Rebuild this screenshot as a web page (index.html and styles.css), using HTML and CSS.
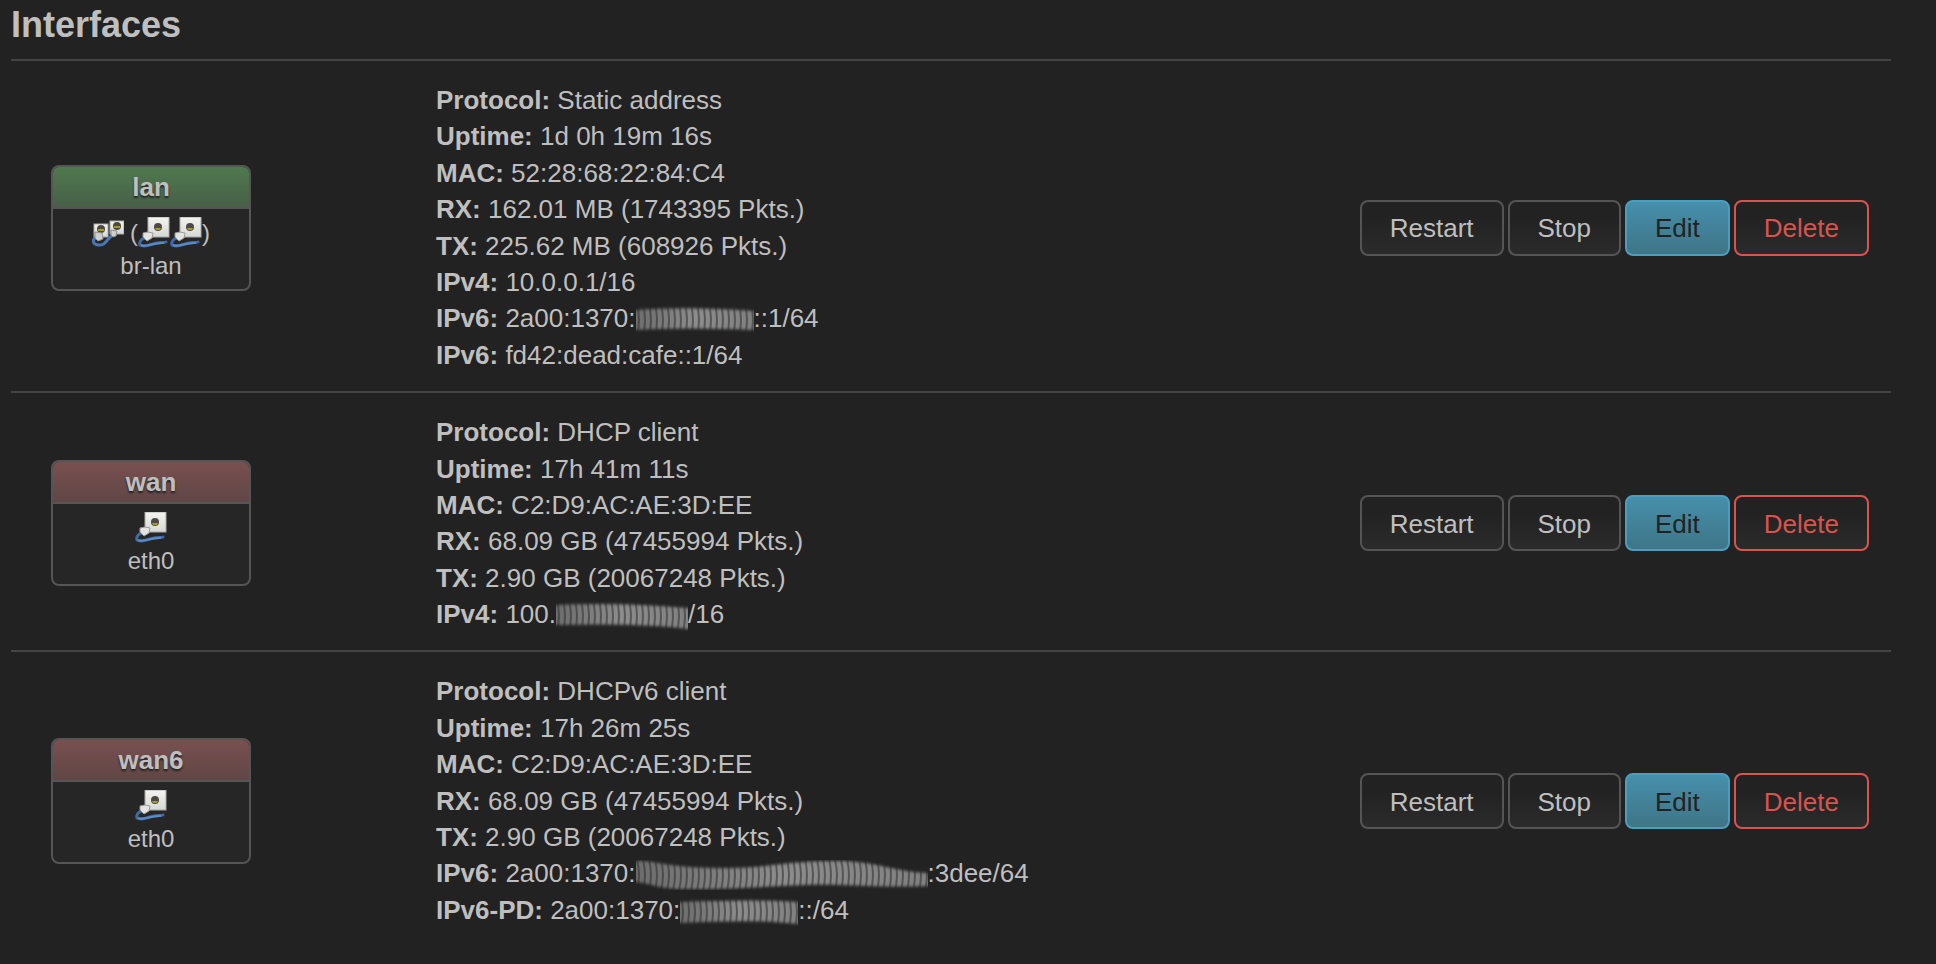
FILE: index.html
```html
<!DOCTYPE html>
<html lang="en">
<head>
<meta charset="utf-8">
<title>Interfaces</title>
<link rel="stylesheet" href="styles.css">
</head>
<body>
<svg class="defs" aria-hidden="true">
  <defs>
    <linearGradient id="plate" x1="0" y1="0" x2="0" y2="1"><stop offset="0" stop-color="#f4f4f2"/><stop offset="1" stop-color="#d6d8d6"/></linearGradient>
    <linearGradient id="ring" x1="0" y1="0" x2="1" y2="0"><stop offset="0" stop-color="#6c6c6c"/><stop offset=".5" stop-color="#8c8c8c"/><stop offset="1" stop-color="#808080"/></linearGradient>
    <pattern id="coil" width="6" height="30" patternUnits="userSpaceOnUse"><path d="M1 0q4 15 0 30" fill="none" stroke="#2c2c2c" stroke-opacity=".55" stroke-width="2"/></pattern>
    <filter id="soft" x="0" y="-20%" width="100%" height="140%"><feGaussianBlur stdDeviation="0.6 1.4"/></filter>
    <filter id="haze" x="-20%" y="-20%" width="140%" height="140%"><feGaussianBlur stdDeviation="0.5"/></filter>
    <symbol id="ethernet" viewBox="0 0 32 32">
      <g filter="url(#haze)">
        <path d="M7 21C3 22 1 25 2 28c5 3 11-1 17-2 4-1 7 0 9-1" fill="none" stroke="#3f6ba6" stroke-width="3" stroke-linecap="round"/>
        <path d="M3 28c6 3 12-3 23-2" fill="none" stroke="#5b8cc8" stroke-width="2"/>
        <rect x="10" y="0" width="21" height="20" fill="url(#plate)" stroke="#a9aaa8"/>
        <circle cx="20" cy="10" r="4" fill="#4b4a42"/>
        <path d="M17 11h6l-1 2h-4z" fill="#a79a22"/>
        <path d="M5 16l5-1 5 1-1 5-5 3-4-4z" fill="#e3e3e3" stroke="#9b9b9b"/>
      </g>
    </symbol>
    <symbol id="bridge" viewBox="0 0 32 32">
      <g filter="url(#haze)">
        <rect x="2" y="7" width="14" height="13" fill="url(#plate)" stroke="#a9aaa8"/>
        <rect x="18" y="4" width="14" height="13" fill="url(#plate)" stroke="#a9aaa8"/>
        <circle cx="9" cy="12" r="4" fill="#4b4a42"/><circle cx="25" cy="9" r="4" fill="#4b4a42"/>
        <path d="M6 12h6v2H6zM22 9h6v2h-6z" fill="#a79a22"/>
        <path d="M5 20C0 22 0 27 6 28c8 1 8-6 15-10" fill="none" stroke="#4677b4" stroke-width="3"/>
        <path d="M3 15l7 1 1 6-5 2-3-3zM19 13l6 1-1 5-3 1-2-2z" fill="#cfcfcf" stroke="#909090"/>
      </g>
    </symbol>
  </defs>
</svg>
<main class="page">
  <h1 class="title">Interfaces</h1>
  <table class="interfaces">
    <tbody>
      <tr class="row">
        <td class="cell-badge">
          <div class="badge">
            <div class="badge-head zone-lan">lan</div>
            <div class="badge-body">
              <div class="devices"><svg class="icon"><use href="#bridge"/></svg><span class="members">(<svg class="icon"><use href="#ethernet"/></svg><svg class="icon"><use href="#ethernet"/></svg>)</span></div>
              <div>br-lan</div>
            </div>
          </div>
        </td>
        <td class="cell-info">
          <div><strong>Protocol:</strong> Static address</div>
          <div><strong>Uptime:</strong> 1d 0h 19m 16s</div>
          <div><strong>MAC:</strong> 52:28:68:22:84:C4</div>
          <div><strong>RX:</strong> 162.01 MB (1743395 Pkts.)</div>
          <div><strong>TX:</strong> 225.62 MB (608926 Pkts.)</div>
          <div><strong>IPv4:</strong> 10.0.0.1/16</div>
          <div><strong>IPv6:</strong> 2a00:1370:<svg class="smudge smudge-short" viewBox="0 0 118 30"><g filter="url(#soft)"><path d="M0 5Q50 1 118 6V25Q50 22 0 25z" fill="url(#ring)"/><path d="M0 5Q50 1 118 6V25Q50 22 0 25z" fill="url(#coil)"/></g></svg>::1/64</div>
          <div><strong>IPv6:</strong> fd42:dead:cafe::1/64</div>
        </td>
        <td class="cell-actions">
          <div class="actions">
            <button type="button" class="btn">Restart</button>
            <button type="button" class="btn">Stop</button>
            <button type="button" class="btn btn-edit">Edit</button>
            <button type="button" class="btn btn-delete">Delete</button>
          </div>
        </td>
      </tr>
      <tr class="row">
        <td class="cell-badge">
          <div class="badge">
            <div class="badge-head zone-wan">wan</div>
            <div class="badge-body">
              <div class="devices"><svg class="icon"><use href="#ethernet"/></svg></div>
              <div>eth0</div>
            </div>
          </div>
        </td>
        <td class="cell-info">
          <div><strong>Protocol:</strong> DHCP client</div>
          <div><strong>Uptime:</strong> 17h 41m 11s</div>
          <div><strong>MAC:</strong> C2:D9:AC:AE:3D:EE</div>
          <div><strong>RX:</strong> 68.09 GB (47455994 Pkts.)</div>
          <div><strong>TX:</strong> 2.90 GB (20067248 Pkts.)</div>
          <div><strong>IPv4:</strong> 100.<svg class="smudge smudge-medium" viewBox="0 0 132 30"><g filter="url(#soft)"><path d="M0 4Q60 1 132 7V28Q90 22 0 24z" fill="url(#ring)"/><path d="M0 4Q60 1 132 7V28Q90 22 0 24z" fill="url(#coil)"/></g></svg>/16</div>
        </td>
        <td class="cell-actions">
          <div class="actions">
            <button type="button" class="btn">Restart</button>
            <button type="button" class="btn">Stop</button>
            <button type="button" class="btn btn-edit">Edit</button>
            <button type="button" class="btn btn-delete">Delete</button>
          </div>
        </td>
      </tr>
      <tr class="row">
        <td class="cell-badge">
          <div class="badge">
            <div class="badge-head zone-wan">wan6</div>
            <div class="badge-body">
              <div class="devices"><svg class="icon"><use href="#ethernet"/></svg></div>
              <div>eth0</div>
            </div>
          </div>
        </td>
        <td class="cell-info">
          <div><strong>Protocol:</strong> DHCPv6 client</div>
          <div><strong>Uptime:</strong> 17h 26m 25s</div>
          <div><strong>MAC:</strong> C2:D9:AC:AE:3D:EE</div>
          <div><strong>RX:</strong> 68.09 GB (47455994 Pkts.)</div>
          <div><strong>TX:</strong> 2.90 GB (20067248 Pkts.)</div>
          <div><strong>IPv6:</strong> 2a00:1370:<svg class="smudge smudge-long" viewBox="0 0 292 30"><g filter="url(#soft)"><path d="M0 1C20 0 30 8 90 8C130 8 150 1 200 1C240 1 260 12 292 13V26C240 28 210 24 170 25C130 26 110 29 60 29C20 30 20 24 0 22z" fill="url(#ring)"/><path d="M0 1C20 0 30 8 90 8C130 8 150 1 200 1C240 1 260 12 292 13V26C240 28 210 24 170 25C130 26 110 29 60 29C20 30 20 24 0 22z" fill="url(#coil)"/></g></svg>:3dee/64</div>
          <div><strong>IPv6-PD:</strong> 2a00:1370:<svg class="smudge smudge-short" viewBox="0 0 118 30"><g filter="url(#soft)"><path d="M0 5Q80 2 118 5V27Q80 22 0 26z" fill="url(#ring)"/><path d="M0 5Q80 2 118 5V27Q80 22 0 26z" fill="url(#coil)"/></g></svg>::/64</div>
        </td>
        <td class="cell-actions">
          <div class="actions">
            <button type="button" class="btn">Restart</button>
            <button type="button" class="btn">Stop</button>
            <button type="button" class="btn btn-edit">Edit</button>
            <button type="button" class="btn btn-delete">Delete</button>
          </div>
        </td>
      </tr>
    </tbody>
  </table>
</main>
</body>
</html>
```
FILE: styles.css
```css
* {
  box-sizing: border-box;
}

body {
  margin: 0;
  background: #222222;
  color: #bfbfbf;
  font: 26px/1.4 "Liberation Sans", Arial, sans-serif;
}

.defs {
  position: absolute;
  width: 0;
  height: 0;
}

.page {
  padding: 0 45px 0 11px;
}

.title {
  margin: 0;
  padding: 5px 0 14px;
  font-size: 36px;
  line-height: 40px;
}

.interfaces {
  width: 100%;
  border-collapse: separate;
  border-spacing: 0;
}

.row td {
  padding: 21px 0 18px;
  border-top: 2px solid #444444;
  vertical-align: middle;
}

.row .cell-badge {
  width: 425px;
  padding-left: 40px;
}

.row .cell-actions {
  padding-right: 22px;
}

.badge {
  width: 200px;
  border: 2px solid #555555;
  border-radius: 8px;
  overflow: hidden;
  text-align: center;
  background: #262626;
}

.badge-head {
  border-bottom: 2px solid #555555;
  font-weight: bold;
  line-height: 40px;
  text-shadow: 0 2px 2px #222222;
}

.zone-lan {
  background: linear-gradient(#4f794f, #486048);
}

.zone-wan {
  background: linear-gradient(#795050, #604646);
}

.badge-body {
  padding: 8px 0 6px;
  font-size: 24px;
  line-height: 34px;
}

.devices {
  display: flex;
  justify-content: center;
  align-items: center;
  gap: 6px;
  height: 32px;
}

.members {
  display: flex;
  align-items: center;
}

.icon {
  display: block;
  width: 32px;
  height: 32px;
}

.smudge {
  height: 30px;
  margin: -4px 0;
  vertical-align: -4px;
}

.smudge-short {
  width: 118px;
}

.smudge-medium {
  width: 132px;
}

.smudge-long {
  width: 292px;
}

.actions {
  display: flex;
  justify-content: flex-end;
  gap: 4px;
}

.btn {
  height: 56px;
  padding: 2px 28px 0;
  border: 2px solid #555555;
  border-radius: 8px;
  background: linear-gradient(#222222 30%, #2b2b2b);
  color: #bfbfbf;
  font: inherit;
}

.btn-edit {
  border-color: #4a9fc0;
  background: linear-gradient(#468fab, #3f7587);
  color: #222222;
}

.btn-delete {
  border-color: #d9534f;
  color: #d9534f;
}
```
